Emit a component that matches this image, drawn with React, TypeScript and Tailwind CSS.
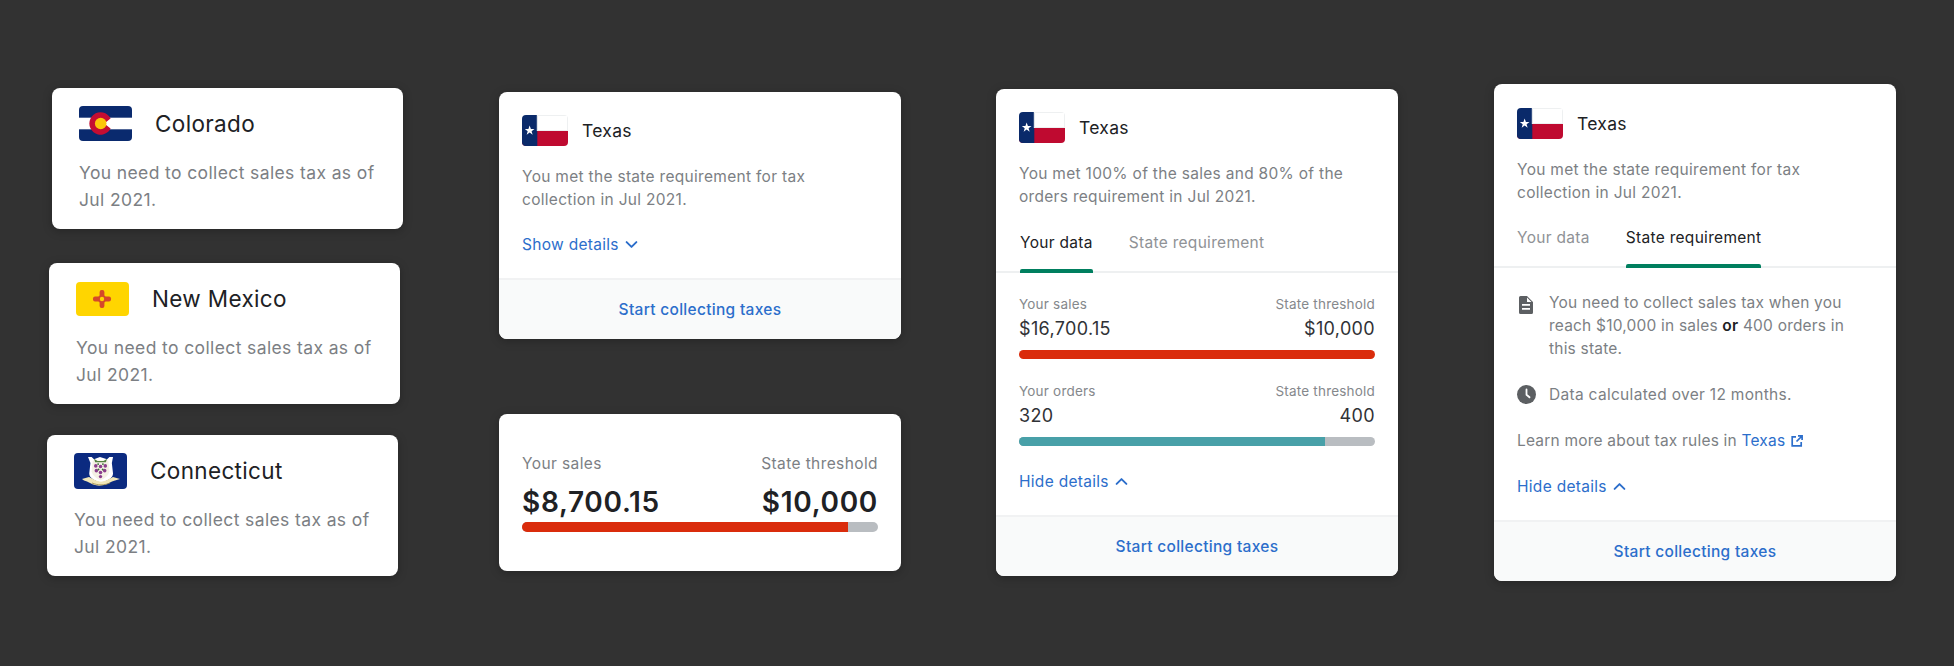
import React from "react";

const FlagCO = () => (
  <svg viewBox="0 0 53 35" className="w-[53px] h-[35px] shrink-0 rounded-[4px] block">
    <rect width="53" height="35" fill="#fff" />
    <rect width="53" height="11.7" fill="#0a2a6e" />
    <rect y="23.3" width="53" height="11.7" fill="#0a2a6e" />
    <path d="M31.6 22.4A11.2 11.2 0 1 1 31.6 12.6L25.2 17.5Z" fill="#c40d32" />
    <circle cx="21.7" cy="17.5" r="5.8" fill="#fcc60a" />
  </svg>
);

const FlagNM = () => (
  <svg viewBox="0 0 53 34" className="w-[53px] h-[34px] shrink-0 rounded-[4px] block">
    <rect width="53" height="34" fill="#ffd500" />
    <g fill="#d5482a">
      <rect x="23.6" y="8" width="4.8" height="18" rx="2" />
      <rect x="17" y="14.6" width="18" height="4.800" rx="2" />
      <rect x="22" y="13" width="8" height="8" transform="rotate(45 26 17)" />
    </g>
    <circle cx="26" cy="17" r="2.200" fill="#ffd500" />
  </svg>
);

const FlagCT = () => (
  <svg viewBox="0 0 53 36" className="w-[53px] h-[36px] shrink-0 rounded-[4px] block">
    <rect width="53" height="36" fill="#0b2a80" />
    <g transform="translate(-5.000 -2.000) scale(1.190)">
      <path d="M16 5h3l2 2 5-2 6 2 2-2h3l-1 5 1 9c0 4-5 6-10 8-5-2-10-4-10-8l1-9z" fill="#fff" />
      <path d="M20 8h13l1 9c-1 4-4 6-7.500 7.500C23 23 20 21 19 17z" fill="#f4f1e4" />
      <path d="M21 6.500l3 2h5l3-2-1 3H22z" fill="#55803f" />
      <g fill="#8b3f8c">
        <circle cx="22.500" cy="12.500" r="1.500" /><circle cx="26.500" cy="13" r="1.500" /><circle cx="30.500" cy="12.500" r="1.500" />
        <circle cx="23" cy="16.500" r="1.500" /><circle cx="26.500" cy="18" r="1.500" /><circle cx="30" cy="16.500" r="1.500" />
        <circle cx="26.500" cy="21.500" r="1.400" />
      </g>
      <g fill="#3d6e3a">
        <circle cx="24.500" cy="11" r=".8" /><circle cx="28.500" cy="11" r=".8" /><circle cx="24.800" cy="15.500" r=".8" /><circle cx="28.300" cy="15.500" r=".8" />
      </g>
    </g>
    <path d="M8 26l7-2 7 3.500c3 1.500 7 1.500 10 0l7-3.500 7 2-5 1.500-3 1-6 3c-5 1.500-9 1.500-13 0l-6-3-3-1z" fill="#f1e7b8" />
    <path d="M18 30c6 2.500 12 2.500 18 0" stroke="#9c8a4a" strokeWidth=".8" fill="none" />
  </svg>
);

const FlagTX = () => (
  <svg viewBox="0 0 46 31" className="w-[46px] h-[31px] shrink-0 rounded-[4px] block border-0">
    <rect width="46" height="15.500" fill="#fff" />
    <rect y="15.500" width="46" height="15.500" fill="#bf0a30" />
    <rect width="15.300" height="31" fill="#0a2a6a" />
    <path d="M7.650 10.600l1.250 3.400h3.600l-2.900 2.200 1.050 3.500-3-2.100-3 2.100 1.050-3.500-2.900-2.200h3.600z" fill="#fff" />
    <rect x="15.300" y=".500" width="30.200" height="15" fill="none" stroke="#eef0f1" strokeWidth="1" />
  </svg>
);

const Chevron = ({ up }: { up?: boolean }) => (
  <svg viewBox="0 0 12 8" className="w-[13px] h-[9px] ml-[6px] shrink-0" fill="none" stroke="#2c6ecb" strokeWidth="1.800" strokeLinecap="round" strokeLinejoin="round">
    <path d={up ? "M1.500 6.200 6 1.800l4.500 4.400" : "M1.500 1.800 6 6.200l4.500-4.400"} />
  </svg>
);

const DocIcon = () => (
  <svg viewBox="0 0 14 18" className="w-[14px] h-[18px] shrink-0 mt-[5px] ml-[2px]">
    <path fillRule="evenodd" d="M1.500 0H8l6 6v10.500a1.500 1.500 0 0 1-1.500 1.500h-11A1.500 1.500 0 0 1 0 16.500v-15A1.500 1.500 0 0 1 1.500 0ZM3 8v1.800h8V8Zm0 4v1.800h8V12ZM8 1.500V6h4.500Z" fill="#5c5f62" />
  </svg>
);

const ClockIcon = () => (
  <svg viewBox="0 0 19 19" className="w-[19px] h-[19px] shrink-0">
    <circle cx="9.500" cy="9.500" r="9.500" fill="#5c5f62" />
    <path d="M9.500 4.500v5.200l3 2.600" fill="none" stroke="#fff" strokeWidth="1.800" strokeLinecap="round" strokeLinejoin="round" />
  </svg>
);

const ExternalIcon = () => (
  <svg viewBox="0 0 12 12" className="w-[12px] h-[12px] ml-[6px] shrink-0" fill="none" stroke="#2c6ecb" strokeWidth="1.700">
    <path d="M5 1.800H1.200v9h9V7" />
    <path d="M7 .9h4.100V5M11 1 5.500 6.500" />
  </svg>
);

const Footer = ({ h }: { h: string }) => (
  <div className={`${h} border-t-2 border-[#f1f2f3] bg-[#f9fafa] flex items-center justify-center text-[15.500px] font-medium text-[#2c6ecb]`}>
    Start collecting taxes
  </div>
);

const Card = ({ className, children }: { className: string; children: React.ReactNode }) => (
  <div className={`bg-white rounded-[8px] overflow-hidden shadow-[0_2px_10px_rgba(0,0,0,0.25)] ${className}`}>{children}</div>
);

const StateCard = ({ flag, name, className, pt, mt }: { flag: React.ReactNode; name: string; className: string; pt: string; mt: string }) => (
  <Card className={`w-[351px] h-[141px] shrink-0 pl-[27px] ${pt} ${className}`}>
    <div className="flex items-center gap-[23px]">
      {flag}
      <span className="text-[22.500px] leading-[28px] tracking-[0.35px] text-[#202124]">{name}</span>
    </div>
    <p className={`${mt} text-[17.500px] leading-[27px] tracking-[0.38px] text-[#7c7f84]`}>
      You need to collect sales tax as of
      <br />
      Jul 2021.
    </p>
  </Card>
);

const Head = ({ lines, mt }: { lines: [string, string]; mt: string }) => (
  <>
    <div className="flex items-center gap-[14px]">
      <FlagTX />
      <span className="text-[17.500px] leading-[24px] text-[#202124]">Texas</span>
    </div>
    <p className={`${mt} text-[15.500px] leading-[23px] text-[#7c7f84]`}>
      {lines[0]}
      <br />
      {lines[1]}
    </p>
  </>
);

const Link = ({ label, up, className }: { label: string; up?: boolean; className: string }) => (
  <div className={`flex items-center text-[15.500px] leading-[23px] text-[#2c6ecb] ${className}`}>
    {label}
    <Chevron up={up} />
  </div>
);

const Bar = ({ fill, pct, h, className }: { fill: string; pct: number; h: string; className: string }) => (
  <div className={`${h} ${className} rounded-full bg-[#b9bdc1] overflow-hidden`}>
    <div className={`h-full ${fill}`} style={{ width: `${pct}%` }} />
  </div>
);

const Tabs = ({ active }: { active: 0 | 1 }) => {
  const labels = ["Your data", "State requirement"];
  return (
    <div className={`flex border-b-2 border-[#eef0f1] gap-[36px] ${active === 0 ? "pl-[24px]" : "pl-[23px]"}`}>
      {labels.map((l, i) => (
        <div key={l} className="-mb-[2px] flex flex-col">
          <span className={`text-[15.500px] leading-[23px] pb-[15px] ${i === active ? "text-[#202124]" : "text-[#8f9296]"}`}>{l}</span>
          <div className={`h-[4px] rounded-t-[2px] ${i === active ? "bg-[#007f5f]" : "bg-transparent"}`} />
        </div>
      ))}
    </div>
  );
};

const Metric = ({ left, value, right, mt }: { left: string; value: string; right: string; mt: string }) => (
  <div className={mt}>
    <div className="flex justify-between text-[13.500px] leading-[20px] tracking-[0.2px] text-[#85888c]">
      <span>{left}</span>
      <span>State threshold</span>
    </div>
    <div className="flex justify-between text-[18px] leading-[24px] mt-[3px] tracking-[0.35px] text-[#303236]">
      <span>{value}</span>
      <span>{right}</span>
    </div>
  </div>
);

export default function App() {
  return (
    <div className="w-[1954px] h-[666px] overflow-hidden bg-[#323232] flex items-start pl-[47px] tracking-[0.3px] font-[Inter,sans-serif]">
      <div className="w-[351px] mr-[101px] shrink-0 flex flex-col items-start pt-[88px]">
        <StateCard flag={<FlagCO />} name="Colorado" pt="pt-[18px]" mt="mt-[18px]" className="ml-[5px]" />
        <StateCard flag={<FlagNM />} name="New Mexico" pt="pt-[19px]" mt="mt-[18px]" className="mt-[34px] ml-[2px]" />
        <StateCard flag={<FlagCT />} name="Connecticut" pt="pt-[18px]" mt="mt-[17px]" className="mt-[31px]" />
      </div>

      <div className="w-[402px] mr-[95px] shrink-0 flex flex-col pt-[92px]">
        <Card className="">
          <div className="pt-[23px] px-[23px] pb-[22px]">
            <Head lines={["You met the state requirement for tax", "collection in Jul 2021."]} mt="mt-[19px]" />
            <Link label="Show details" className="mt-[22px]" />
          </div>
          <Footer h="h-[61px]" />
        </Card>
        <Card className="mt-[75px] h-[157px] pt-[40px] px-[23px]">
          <div className="flex justify-between text-[15.500px] leading-[20px] tracking-[0.4px] text-[#7c7f84]">
            <span>Your sales</span>
            <span>State threshold</span>
          </div>
          <div className="flex justify-between mt-[11px] text-[28px] leading-[34px] tracking-[0.7px] font-semibold text-[#202124]">
            <span>$8,700.15</span>
            <span>$10,000</span>
          </div>
          <Bar fill="bg-[#da2c0c]" pct={91.700} h="h-[10px]" className="mt-[3px]" />
        </Card>
      </div>

      <div className="w-[402px] mr-[96px] shrink-0 pt-[89px]">
        <Card className="">
          <div className="pt-[23px] px-[23px]">
            <Head lines={["You met 100% of the sales and 80% of the", "orders requirement in Jul 2021."]} mt="mt-[19px]" />
          </div>
          <div className="mt-[23px]">
            <Tabs active={0} />
          </div>
          <div className="px-[23px] pb-[22px]">
            <Metric left="Your sales" value="$16,700.15" right="$10,000" mt="mt-[21px]" />
            <Bar fill="bg-[#da2c0c]" pct={100} h="h-[9px]" className="mt-[9px]" />
            <Metric left="Your orders" value="320" right="400" mt="mt-[22px]" />
            <Bar fill="bg-[#48a0a8]" pct={86} h="h-[9px]" className="mt-[9px]" />
            <Link label="Hide details" up className="mt-[24px]" />
          </div>
          <Footer h="h-[61px]" />
        </Card>
      </div>

      <div className="w-[402px] shrink-0 pt-[84px]">
        <Card className="">
          <div className="pt-[24px] px-[23px]">
            <Head lines={["You met the state requirement for tax", "collection in Jul 2021."]} mt="mt-[19px]" />
          </div>
          <div className="mt-[22px]">
            <Tabs active={1} />
          </div>
          <div className="px-[23px] pt-[23px] pb-[22px] text-[15.500px] leading-[23px] text-[#7c7f84]">
            <div className="flex gap-[16px]">
              <DocIcon />
              <p className="tracking-[0.2px]">
                You need to collect sales tax when you
                <br />
                reach $10,000 in sales <b className="font-semibold text-[#202124]">or</b> 400 orders in
                <br />
                this state.
              </p>
            </div>
            <div className="flex items-center gap-[13px] mt-[23px]">
              <ClockIcon />
              <span>Data calculated over 12 months.</span>
            </div>
            <p className="mt-[23px] flex items-center tracking-[0.2px]">
              Learn more about tax rules in&nbsp;<span className="text-[#2c6ecb]">Texas</span>
              <ExternalIcon />
            </p>
            <Link label="Hide details" up className="mt-[23px]" />
          </div>
          <Footer h="h-[61px]" />
        </Card>
      </div>
    </div>
  );
}
